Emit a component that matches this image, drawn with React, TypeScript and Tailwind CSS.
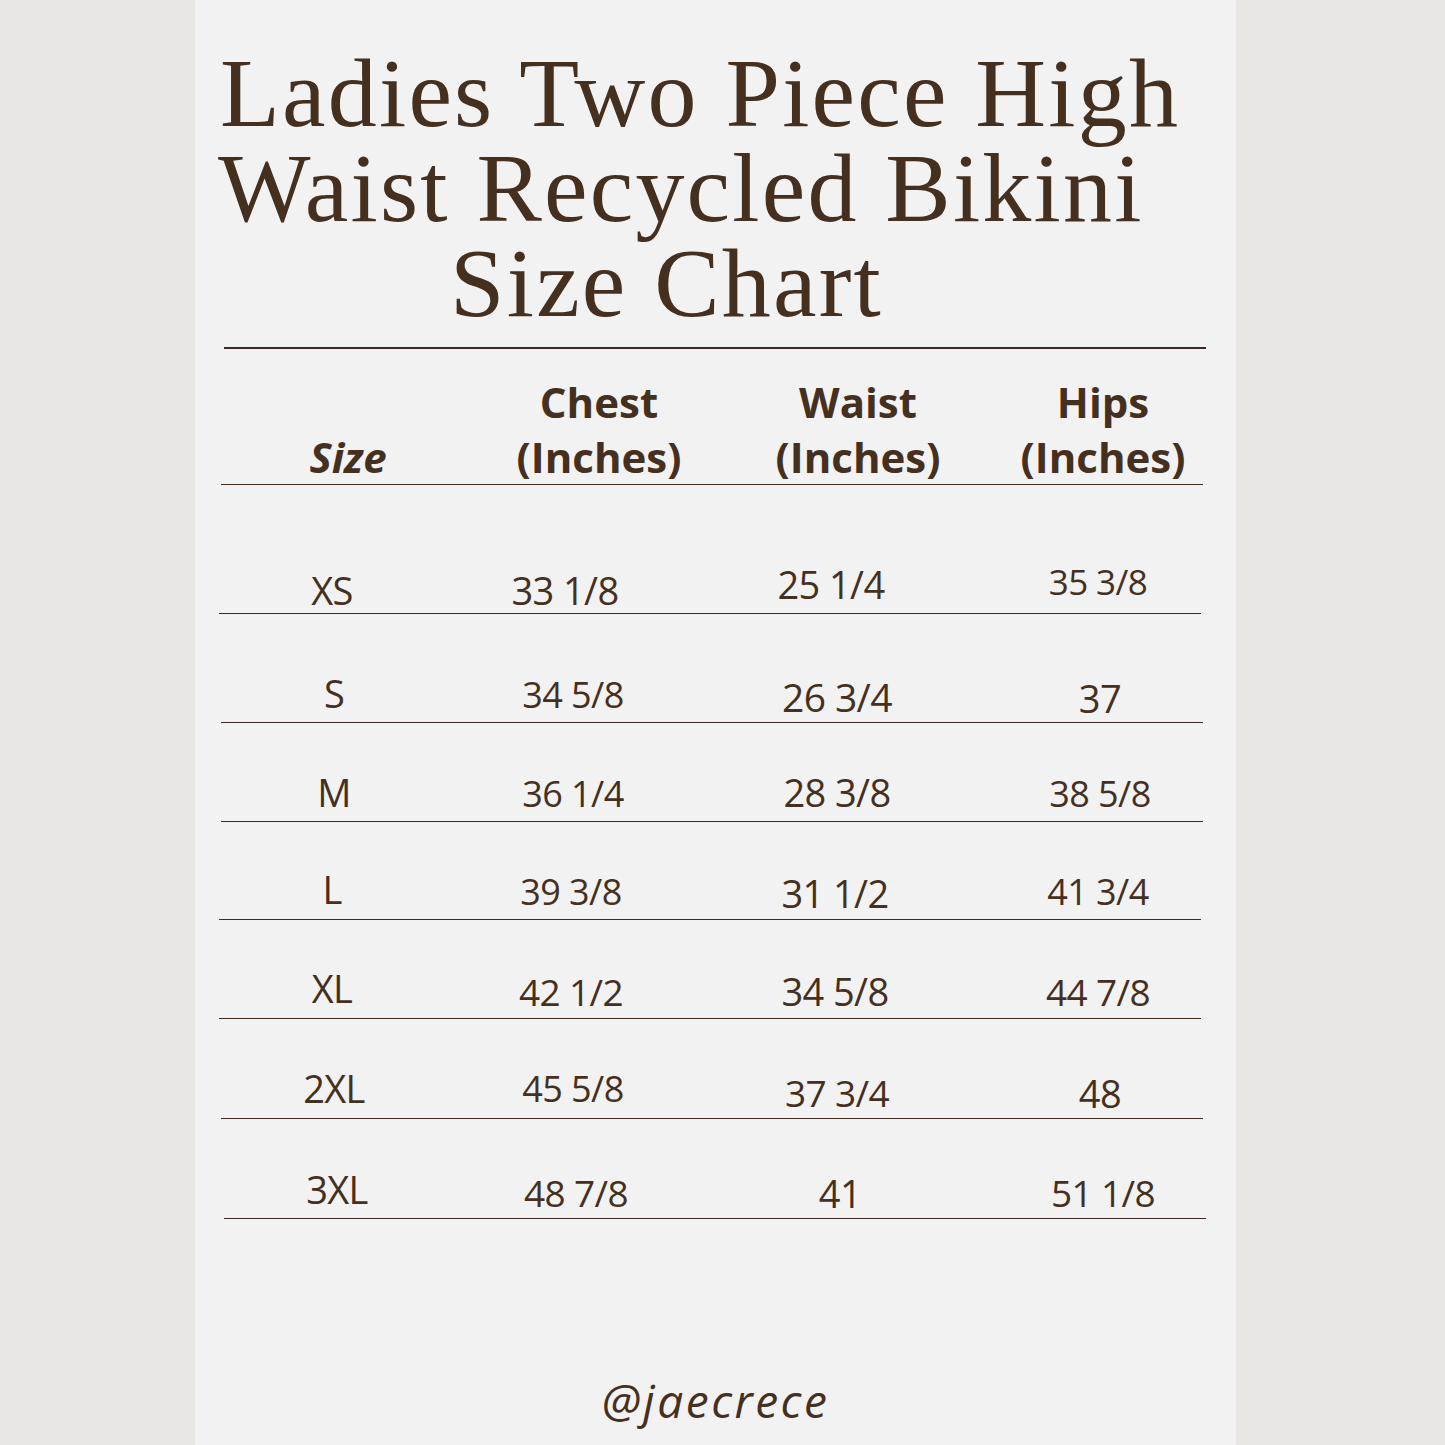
import React from 'react';

type Cell = { t: string; cls: string };
type Row = { h: string; ml: string; cells: Cell[] };

// pb = distance from baseline to the rule, minus ~4px of line box below the baseline
const rows: Row[] = [
  {
    h: 'h-[129px]',
    ml: 'ml-[24px]',
    cells: [
      { t: 'XS', cls: 'pb-[4px] text-[38px]' },
      { t: '33 1/8', cls: 'pb-[4px] text-[38px] -ml-[12px]' },
      { t: '25 1/4', cls: 'pb-[10px] text-[38px] -ml-[8px]' },
      { t: '35 3/8', cls: 'pb-[14px] text-[35px]' },
    ],
  },
  {
    h: 'h-[109px]',
    ml: 'ml-[26px]',
    cells: [
      { t: 'S', cls: 'pb-[10px] text-[38px]' },
      { t: '34 5/8', cls: 'pb-[9px] text-[36px]' },
      { t: '26 3/4', cls: 'pb-[6px] text-[39px]' },
      { t: '37', cls: 'pb-[5px] text-[38px]' },
    ],
  },
  {
    h: 'h-[99px]',
    ml: 'ml-[26px]',
    cells: [
      { t: 'M', cls: 'pb-[10px] text-[38px]' },
      { t: '36 1/4', cls: 'pb-[9px] text-[36px]' },
      { t: '28 3/8', cls: 'pb-[10px] text-[38px]' },
      { t: '38 5/8', cls: 'pb-[9px] text-[36px]' },
    ],
  },
  {
    h: 'h-[98px]',
    ml: 'ml-[24px]',
    cells: [
      { t: 'L', cls: 'pb-[11px] text-[38px]' },
      { t: '39 3/8', cls: 'pb-[9px] text-[36px]' },
      { t: '31 1/2', cls: 'pb-[7px] text-[38px]' },
      { t: '41 3/4', cls: 'pb-[9px] text-[36px]' },
    ],
  },
  {
    h: 'h-[99px]',
    ml: 'ml-[24px]',
    cells: [
      { t: 'XL', cls: 'pb-[11px] text-[38px]' },
      { t: '42 1/2', cls: 'pb-[8px] text-[37px]' },
      { t: '34 5/8', cls: 'pb-[8px] text-[38px]' },
      { t: '44 7/8', cls: 'pb-[8px] text-[37px]' },
    ],
  },
  {
    h: 'h-[100px]',
    ml: 'ml-[26px]',
    cells: [
      { t: '2XL', cls: 'pb-[11px] text-[38px]' },
      { t: '45 5/8', cls: 'pb-[11px] text-[36px]' },
      { t: '37 3/4', cls: 'pb-[7px] text-[37px]' },
      { t: '48', cls: 'pb-[6px] text-[38px]' },
    ],
  },
  {
    h: 'h-[100px]',
    ml: 'ml-[29px]',
    cells: [
      { t: '3XL', cls: 'pb-[10px] text-[38px]' },
      { t: '48 7/8', cls: 'pb-[7px] text-[37px]' },
      { t: '41', cls: 'pb-[6px] text-[38px]' },
      { t: '51 1/8', cls: 'pb-[7px] text-[37px]' },
    ],
  },
];

const sans = "font-['Open_Sans','Liberation_Sans',sans-serif]";

export default function App() {
  return (
    <div className="min-h-[1445px] w-full bg-[#e8e7e4] flex">
      <div className="w-[1041px] min-h-[1445px] bg-[#f2f2f2] ml-[195px] flex flex-col text-[#45301f]">
        {/* Title */}
        <h1 className="pt-[46px] font-['Liberation_Serif','Times_New_Roman',serif] text-[98px] leading-[95px] font-normal tracking-[2.2px] whitespace-nowrap">
          <div className="pl-[25px]">Ladies Two Piece High</div>
          <div className="pl-[23px]">Waist Recycled Bikini</div>
          <div className="pl-[255px]">Size Chart</div>
        </h1>

        {/* Table */}
        <div className={`mt-[16px] ${sans}`}>
          <div className="ml-[29px] w-[982px] h-[1.5px] bg-[#3e2a1e]" />
          <div className="ml-[26px] w-[982px] h-[136px] border-b-[1.5px] border-[#3e2a1e] grid grid-cols-[254px_248px_270px_220px] items-end text-center font-bold text-[42px] leading-[55px] whitespace-nowrap">
            <div className="italic">Size</div>
            <div>
              Chest
              <br />
              (Inches)
            </div>
            <div>
              Waist
              <br />
              (Inches)
            </div>
            <div>
              Hips
              <br />
              (Inches)
            </div>
          </div>
          {rows.map((r) => (
            <div
              key={r.cells[0].t}
              className={`${r.h} ${r.ml} w-[982px] border-b-[1.5px] border-[#3e2a1e] grid grid-cols-[226px_252px_276px_250px] items-end text-center leading-none whitespace-nowrap tracking-[-0.6px]`}
            >
              {r.cells.map((c) => (
                <div key={c.t} className={c.cls}>
                  {c.t}
                </div>
              ))}
            </div>
          ))}
        </div>

        {/* Handle */}
        <div className={`mt-[158px] text-center italic text-[46px] leading-none tracking-[2.5px] ${sans}`}>
          @jaecrece
        </div>
      </div>
    </div>
  );
}
